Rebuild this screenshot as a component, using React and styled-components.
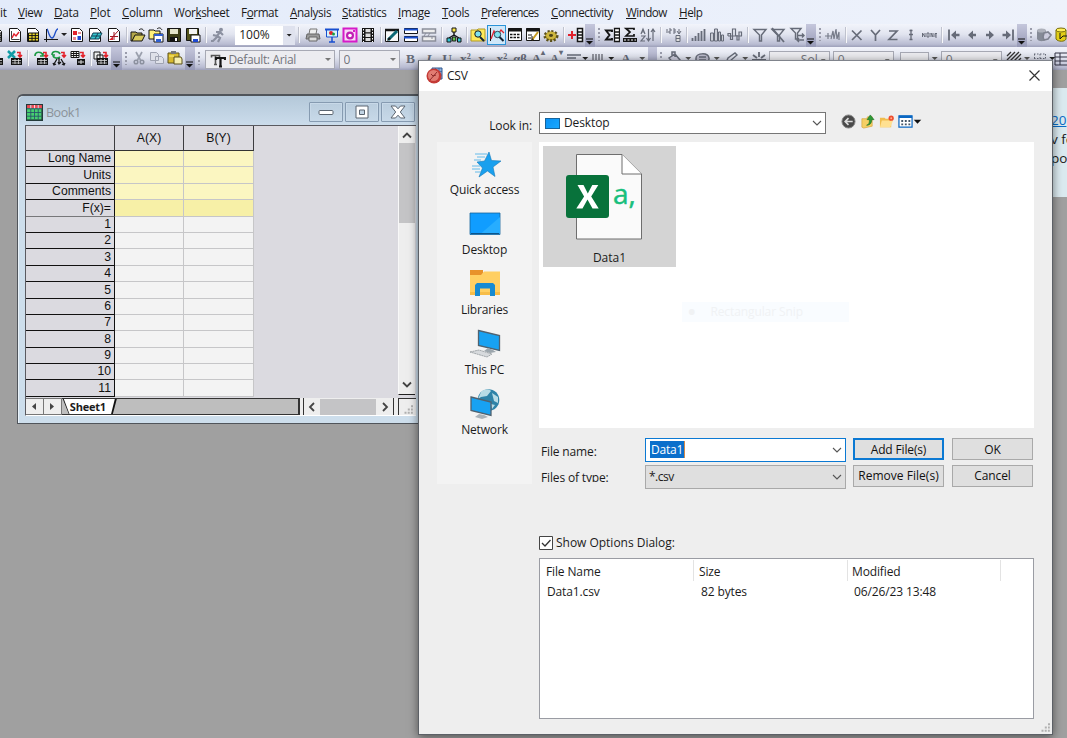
import React from "react";
import styled, { createGlobalStyle, css } from "styled-components";

const UI = '"Open Sans", "Noto Sans", sans-serif';

const Global = createGlobalStyle`
  *, *::before, *::after { box-sizing: border-box; }
  body { margin: 0; overflow: hidden; background: #a0a0a0; }
`;

const Desktop = styled.div`
  position: relative;
  width: 1067px;
  height: 738px;
  overflow: hidden;
  background: #a0a0a0;
  color: #1b1b1b;
  font: 12px/16px ${UI};
  white-space: nowrap;
`;

/* ---------- menu and toolbars ---------- */

const MenuBar = styled.nav`
  display: flex;
  height: 24px;
  background: linear-gradient(90deg, #e3ebfa, #eef2fb);
  line-height: 24px;
`;

const MenuItem = styled.span`
  flex: none;
  width: ${(p) => p.$w}px;
  letter-spacing: ${(p) => p.$ls}px;
  font-size: 11.7px;
`;

const ToolRow = styled.div`
  display: flex;
  height: ${(p) => p.$h}px;
  background: #a9abc6;
  overflow: hidden;
  margin-left: ${(p) => p.$shift || 0}px;
`;

const Band = styled.div`
  display: flex;
  flex: none;
  align-items: center;
  height: 100%;
  padding-bottom: ${(p) => p.$pb ?? 2}px;
  border-radius: 0 0 3px 3px;
  background: linear-gradient(#f2f4fb 0%, #e1e4ef 45%, #b9bcd2 88%, #9da0b9 100%);
`;

const Slot = styled.span`
  display: flex;
  flex: none;
  align-items: center;
  justify-content: center;
  width: ${(p) => p.$w || 18.25}px;
  height: 20px;
  overflow: visible;
  ${(p) => p.$active && css`
    outline: 1px solid #2a93d8;
    outline-offset: -1px;
    background: #cfe7f8;
  `}
  svg { flex: none; width: 16px; height: 16px; }
`;

const Sep = styled.i`
  flex: none;
  width: ${(p) => p.$w || 7}px;
  height: 16px;
  background: linear-gradient(90deg, #bfc2ce 1px, #f8f8fb 1px 2px, transparent 2px) no-repeat 3px 0;
`;

const Grip = styled.i`
  flex: none;
  width: 8px;
  height: 13px;
  background: repeating-linear-gradient(#9a9cab 0 2px, transparent 2px 4px) no-repeat 3px 0 / 2px 13px;
`;

const Overflow = styled.i`
  display: flex;
  flex: none;
  align-items: flex-end;
  justify-content: center;
  width: ${(p) => p.$w || 10}px;
  padding-bottom: 2px;
  background: linear-gradient(#c5c7dc, #9699b6);
  svg { width: 7px; height: 7px; }
`;

const Caret = styled.i`
  flex: none;
  width: ${(p) => p.$w || 9}px;
  height: 3px;
  background: ${(p) => p.$c || "#222"};
  clip-path: polygon(calc(50% - 3px) 0, calc(50% + 3px) 0, 50% 100%);
`;

const Combo = styled.div`
  display: flex;
  flex: none;
  align-items: center;
  width: ${(p) => p.$w}px;
  height: ${(p) => p.$h || 19}px;
  margin: ${(p) => p.$mt ?? 1}px ${(p) => p.$mr || 0}px 0 ${(p) => p.$ml || 0}px;
  padding-left: 4px;
  border: ${(p) => (p.$flat ? 0 : 1)}px solid #a7a9b4;
  background: ${(p) => p.$bg || "#ececf0"};
  color: ${(p) => p.$c || "#73757c"};
  font-size: 12px;
  letter-spacing: ${(p) => p.$ls || 0}px;
  span { flex: 1; overflow: hidden; }
  > svg { width: 16px; height: 16px; margin-right: 3px; }
`;

const ZoomCaret = styled.i`
  display: flex;
  align-items: center;
  justify-content: center;
  width: 12px;
  height: 100%;
  background: #dfe2ee;
`;

const K = "#151515";
const G = "#666b78";

const sheet = (x, y, w, h, c = K) => (
  <g stroke={c} fill="#fff">
    <path d={`M${x} ${y}h${w}v${h}h-${w}z`} />
    <path d={`M${x} ${y + h / 3}h${w}M${x} ${y + (2 * h) / 3}h${w}M${x + w / 3} ${y}v${h}M${x + (2 * w) / 3} ${y}v${h}`} />
  </g>
);
const page = <path d="M2.500 1.500h8l3 3v10h-11z" fill="#fff" stroke={K} />;
const darkGrid = (
  <>
    <path d="M4 8h11v7H4z" fill={K} />
    <path d="M5 10.500h9M5 13h9M8 9v5M11.500 9v5" stroke="#d9d9d9" strokeWidth=".8" />
  </>
);
const redHook = <path d="M10 2.500h3v4m-2-1.500 2 2 2-2" stroke="#e3222b" strokeWidth="1.6" fill="none" />;
const bars = (c) => <path d="M2.500 11v3M5.500 9v5M8.500 6v8M11.500 4v10M14.500 2v12" stroke={c} strokeWidth="1.8" />;
const funnel = <path d="M2 2.500h12L9.500 8v6h-2V8z" fill="none" stroke={G} strokeWidth="1.4" />;

const art = {
  sheetCut: <>{page}{sheet(5, 6, 8, 7)}</>,
  graph: <>{page}<path d="M4.500 4v8.500h8" stroke="#444" fill="none" /><path d="m5 11 2-4 2 2 3-4" stroke="#e1212c" strokeWidth="1.400" fill="none" /></>,
  yellowSheet: <>{page}<path d="M3.500 6h10v8h-10z" fill="#f1dc2c" stroke={K} /><path d="M3.500 8.600h10M3.500 11.300h10M7 6v8M10.300 6v8" stroke={K} /></>,
  curve: <><path d="M3.500 2v13M1 12.500h14" stroke={K} /><path d="M4 2c1 0 2 9 5 9s3-9 6-9" stroke="#1e4fc9" strokeWidth="1.300" fill="none" /></>,
  layout: <>{page}<path d="M4 4h4v4H4z" fill="#e1212c" /><path d="M8.500 9H12v4H8.500z" fill="#1d48d2" /><path d="M4 10h3v3H4zM9 5h3v2H9z" fill="#e98790" /></>,
  matrix: <>{page}<path d="m3 12 3-6h9l-3 6z" fill="#35c5ce" stroke="#123f55" /><path d="M5 9h8M8 12l3-6" stroke="#123f55" /></>,
  fn: <>{page}<path d="M4 13 12 4M8 5v8M4 9.500h8" stroke="#a51a25" /><path d="m3 13 4-3v3z" fill="#e1212c" /></>,
  open: <><path d="M1 5h5l1 1h5v3H5l-3 5H1z" fill="#b4a74a" stroke={K} /><path d="m2 14 3-6h10l-3 6z" fill="#d9cb5c" stroke={K} /><path d="M9 3c2-2 4-1 5 1" stroke={K} fill="none" /></>,
  openMulti: <><path d="M1 3h5l1 1h5v8H1z" fill="#fff27a" stroke={K} /><path d="M9 2c2-2 4-1 5 1" stroke={K} fill="none" /><path d="M6 7h9v8H6z" fill="#fff" stroke={K} /><path d="M6 7h9v2H6zM8 12h5v3H8z" fill="#2f5fd0" /></>,
  save: <><path d="M1.500 1.500h13v13h-13z" fill="#3d3e17" stroke={K} /><path d="M4 2h8v5H4z" fill="#e3e3c9" /><path d="M4 10h8v4H4z" fill="#111" /><path d="M10 11v3" stroke="#fff" strokeWidth="2" /></>,
  saveAs: <><path d="M1.500 1.500h12v12h-12z" fill="#52531d" stroke={K} /><path d="M4 2h8v5H4z" fill="#f3f3f3" /><path d="M6 8h9v7H6z" fill="#fff" stroke={K} /><path d="M8 12h5v3H8z" fill="#1d48d2" /></>,
  run: <><circle cx="11" cy="2.800" r="2" fill="#8b90a0" /><path d="m10 5-3 4-4-1m4 1 3 2-2 4M6 5l4 0 3 3M7 10l-4 4H1" stroke="#8b90a0" strokeWidth="2.200" fill="none" /></>,
  printer: <><path d="m4 7 1-5h7l-1 5" fill="#eee" stroke="#777" /><path d="M2 7h12l1 5H1z" fill="#9a9a9a" stroke="#666" /><path d="M4 10h8v4H4z" fill="#ddd" stroke="#666" /></>,
  board: <><path d="M1 2.500h14" stroke="#184fd0" strokeWidth="2" /><path d="M2.500 3h11v7h-11z" fill="#d9f3f9" stroke="#184fd0" /><path d="M8 10v5M5 15h6" stroke="#184fd0" strokeWidth="1.500" /><circle cx="7" cy="6" r="2" fill="#e1212c" /><circle cx="9.500" cy="7" r="1.500" fill="#1f9b46" /></>,
  camera: <><path d="M1.500 1.500h13v13h-13z" fill="#f8d9f7" stroke="#d61bc9" strokeWidth="2" /><circle cx="8" cy="8.500" r="4" fill="#c01fb4" /><circle cx="8" cy="8.500" r="1.800" fill="#fff" /><path d="M11 4h2" stroke="#d61bc9" strokeWidth="2" /></>,
  film: <><path d="M2 1h12v14H2z" fill={K} /><path d="M5.500 2h5v3.300h-5zM5.500 6.500h5V10h-5zM5.500 11h5v3h-5z" fill="#ddd" /><path d="M3.500 2v13M12.500 2v13" stroke="#fff" strokeDasharray="1.500 1.500" /></>,
  note: <><path d="M1.500 2.500h13v12h-13z" fill="#f8f8f8" stroke={K} /><path d="M1 3h14" stroke={K} strokeWidth="2.500" /><path d="m4 13 9-9" stroke="#0c6976" strokeWidth="3" /><path d="m3 14 2-4 2 2z" fill={K} /></>,
  split: <><path d="M1.500 1.500h13v5h-13zM1.500 9.500h13v5h-13z" fill="#fff" stroke={K} /><path d="M1 2.500h14M1 10.500h14" stroke="#184fd0" strokeWidth="2" /></>,
  splitGray: <><path d="M1.500 2h13v4h-13zM1.500 9.500h13v4.500h-13z" fill="#eee" stroke="#8b8e9a" strokeWidth="1.500" /><path d="m5 6-2 3m6-3-2 3m4 0v3" stroke="#8b8e9a" /></>,
  tree: <><path d="M8 5v4M3 11l5-3 5 3" stroke={K} strokeWidth="1.400" fill="none" /><path d="M6 1h4v4H6z" fill="#ffe94a" stroke={K} /><path d="M1 11h4v4H1z" fill="#32c4d2" stroke={K} /><path d="M6.300 10h3.500v4H6.300z" fill="#64c34e" stroke={K} /><path d="M11.500 11H15v4h-3.500z" fill="#32c4d2" stroke={K} /></>,
  folderFind: <><path d="M1 3h6l1-1h7v12H1z" fill="#ffe95a" stroke="#b09a25" /><circle cx="8" cy="7" r="3.200" fill="#7fe2ee" stroke={K} /><path d="m10 10 4 4" stroke="#123" strokeWidth="2" /></>,
  curveFind: <><path d="M1.500 1v13" stroke={K} /><path d="m2 12 3-8 3 5 4-6 3 3" stroke="#e1212c" strokeWidth="1.300" fill="none" /><circle cx="8.500" cy="7.500" r="3.200" fill="#7fe2ee" stroke="#345" /><path d="m10.500 10 4 4" stroke="#123" strokeWidth="2" /></>,
  window: <><path d="M1.500 1.500h13v12h-13z" fill="#fff" stroke={K} /><path d="M1 3h14" stroke={K} strokeWidth="3" /><path d="M3 7.500h10M3 10.500h10" stroke={K} strokeWidth="1.300" strokeDasharray="2.500 1" /></>,
  windowPen: <><path d="M1.500 1.500h13v12h-13z" fill="#fff" stroke={K} /><path d="M1 3h14" stroke={K} strokeWidth="3" /><path d="M3 8h4M3 11h3" stroke={K} /><path d="m7 13 6-8" stroke="#c69a20" strokeWidth="2" /><path d="M7 9v4h2" stroke={K} fill="none" /></>,
  gear: <><ellipse cx="8" cy="9" rx="6" ry="4.500" fill="#b49c22" stroke="#5b501b" strokeWidth="3" strokeDasharray="2 1.500" /><ellipse cx="8" cy="8.500" rx="5" ry="3.800" fill="#cdb63e" /><ellipse cx="8" cy="8.500" rx="2" ry="1.400" fill="#4c4417" /></>,
  addCol: <><path d="M0 8h8M4 4v8" stroke="#e1212c" strokeWidth="2" /><path d="M9.500 1.500h5v13h-5z" fill="#fff" stroke={K} strokeWidth="1.500" /><path d="M9 5h6M9 8h6M9 11h6" stroke={K} strokeWidth="1.500" /></>,
  sigmaCol: <><path d="M8 5V3.500H2L5.500 8 2 12.500h6V11" stroke={K} strokeWidth="1.900" fill="none" /><path d="M10.500 1.500h5v13h-5zM10.500 5h5M10.500 8h5M10.500 11h5" stroke={K} strokeWidth="1.300" fill="#fff" /></>,
  sigmaRow: <><path d="M12 3V1.500H4L8 5 4 9h8V7" stroke={K} strokeWidth="1.700" fill="none" /><path d="M1 11h14v4H1z" fill={K} /><path d="M2 13h12" stroke="#fff" strokeDasharray="2 1.500" /></>,
  sort: <><path d="m1 7 2-5 2 5M1.500 5h3M1 9h4l-4 5h4M8.500 2v11m-2-2 2 3 2-3M13 14V3m-2 2 2-3 2 3" stroke={G} fill="none" strokeWidth="1.200" /></>,
  rank: <><path d="M1 2v4M3 2h2v2H3v2h2M7 2h2v4H7M7 4h2M13 2v4m-2-2 2 3 2-3" stroke={G} fill="none" /><path d="M10 8.500h4v6h-4zM10 11.500h4" stroke={G} fill="#ddd" /></>,
  bars: bars(G),
  hist: <path d="M1.500 14V6h3v8zM5.500 14V2h3v12zM9.500 14V5h2v9zM12.500 14V8h2v6z" fill="#c9ccd5" stroke={G} />,
  wave: <path d="M1 9V6.500h2.500v6h2V9M5.500 9V2h3v7M10 8v5h2V5h2.500v4M1 9h14" stroke={G} strokeWidth="1.200" fill="none" />,
  funnel,
  funnelOff: <>{funnel}<path d="m2 1 12 14" stroke={G} strokeWidth="1.800" /></>,
  funnelGo: <><path d="M2 1.500h10L8.500 6v6h-2V6z" fill="none" stroke={G} strokeWidth="1.400" /><path d="M9 8.500h6m-2-2 2 2-2 2M15 13H8m2-2-2 2 2 2" stroke={G} strokeWidth="1.400" fill="none" /></>,
  plusWave: <path d="M0 9h6M3 6v6M6 12l2-8 1 8 2-10 1 10 2-7v8" stroke="#777c8a" strokeWidth="1.200" fill="none" />,
  x: <path d="m3 3.500 9.500 9.500M12.500 3.500 3 13" stroke={G} strokeWidth="1.700" />,
  y: <path d="m4 3 4.500 5L13 3M8.500 8v6" stroke={G} strokeWidth="1.700" fill="none" />,
  z: <path d="M4 4h8L4 12.500h8.500" stroke={G} strokeWidth="1.700" fill="none" />,
  i: <path d="M8 2.500v10M6.500 3.500h3M6.500 12.500h3M6 7.500h4" stroke={G} strokeWidth="1.300" />,
  none: <path d="M1.500 10V6l2.500 4V6M6 6h2v4H6zM10 10V6l2 4V6M16 6.500h-2V10h2M14 8h2" stroke={G} fill="none" />,
  first: <><path d="M3 2.500v11" stroke={G} strokeWidth="1.800" /><path d="m5 8 5-4.500v3.300h3.500v2.400H10v3.300z" fill={G} /></>,
  prev: <path d="m4 8 5-4.500v3.300h3v2.400H9v3.300z" fill={G} />,
  next: <path d="M12 8 7 3.500v3.300H4v2.400h3v3.300z" fill={G} />,
  last: <><path d="M13 2.500v11" stroke={G} strokeWidth="1.800" /><path d="M11 8 6 3.500v3.300H2.500v2.400H6v3.300z" fill={G} /></>,
  db: <><path d="M1 3v9c2 3 7 3 9 0V3z" fill="#858a96" /><ellipse cx="5.500" cy="3.500" rx="4.500" ry="2" fill="#aeb1bb" /><path d="m8 6 4-1 3 3-3 4-4 1-1-3z" fill="#ccd" stroke="#7e828f" strokeWidth="1.600" /></>,
  dbYellow: <><path d="M2 3v9c2 3 9 3 10 0V3z" fill="#e3cf16" stroke="#776c0a" /><ellipse cx="7" cy="3" rx="5" ry="2" fill="#fff05a" stroke="#776c0a" /><path d="M6 6v6l3-3h4" stroke={K} fill="none" /></>,
  impRed: <><path d="M0 4h9M6 2v5" stroke="#e3222b" strokeWidth="1.800" />{darkGrid}</>,
  impX: <><path d="m1 1 7 7M8 1 1 8" stroke="#129ca6" strokeWidth="2.500" />{darkGrid}{redHook}</>,
  impA: <>{darkGrid}<path d="M2 6c0-5 7-5 8 0M10 3v3H7" stroke="#1c9b45" strokeWidth="1.700" fill="none" />{redHook}</>,
  impB: <><path d="M1 5c0-5 7-4 8-1M1 5h3M9 7C6 9 3 8 2 6" stroke="#1c9b45" strokeWidth="1.700" fill="none" /><path d="M8 8v6M3 14l3-5M13 14l-3-5M2 13l1 2 2-1M7 12l1 2 2-2M11 14l2 1 1-2" stroke={K} strokeWidth="1.300" fill="none" />{redHook}</>,
  impC: <>{sheet(1, 1.5, 8, 6)}<path d="M7 9h8v6H7z" fill={K} /><path d="M8 12h6M11 10v4" stroke="#ddd" />{redHook}</>,
  impD: <><path d="M1 2h6v7H1zM4 5h6v7H4z" fill="#eee" stroke={K} />{darkGrid}{redHook}</>,
  cut: <><path d="m5 2 5 9M11 2 6 11" stroke="#9ba0ad" strokeWidth="1.700" /><circle cx="5" cy="12" r="1.800" fill="none" stroke="#8c919f" strokeWidth="1.500" /><circle cx="11" cy="12" r="1.800" fill="none" stroke="#8c919f" strokeWidth="1.500" /></>,
  copy: <path d="M1.500 2.500h6l2 2v6h-8zM6.500 6.500h6l2 2v5h-8z" fill="#dfe1e9" stroke="#a0a4b2" />,
  paste: <><path d="M1 3h11v10H1z" fill="#d8ba2f" stroke="#5b501b" /><path d="M4 1h5v3H4z" fill="#777" /><path d="M7 7h7l1 2v5H7z" fill="#f6efb0" stroke="#5b501b" /><path d="M2 6h5" stroke="#fff27a" /></>,
  tt: <><path d="M1.500 5.500v-2h8v2M5.500 4v8M4 12.500h3" stroke="#555" strokeWidth="1.600" fill="none" /><path d="M6 8V6h9v2M10.500 6v8M9 14.500h3" stroke={K} strokeWidth="2.200" fill="none" /></>,
  align: <path d="M1 4h14M1 7h9M1 10h14M1 13h9" stroke={G} strokeWidth="1.300" />,
  lines: <path d="M3 3v9M6 3v9M9 3v9M12 3v9" stroke="#888b95" strokeWidth="1.800" />,
  bucket: <path d="m3 7 6-4 5 6-5 5zM6 5V1h3v5M14 9v4" stroke={G} strokeWidth="1.500" fill="#ccd" />,
  palette: <path d="M2 7c0-5 12-6 13 0s-12 8-13 2zM5 6h7M5 9h7" stroke={G} strokeWidth="1.500" fill="#bbc" />,
  pen: <path d="m3 12 2-5 7-5 2 2-7 6zM3 13h6" stroke={G} strokeWidth="1.400" fill="none" />,
  burst: <path d="M8 1v5M2 4l4 3M14 4l-4 3M1 9h14" stroke={G} strokeWidth="1.800" />,
  hatch: <path d="m1 5 4-4M1 9l8-8M1 13 13 1M5 13 15 3M9 13l6-6" stroke="#333" strokeWidth="1.300" />,
  dots: <path d="M2 3h12M2 7.500h12M2.500 3v10M8 3v10M13.500 3v10" stroke={G} strokeDasharray="1.500 1.500" />,
  table: <path d="M1 2h14v12H1zM1 6h14M1 10h14M6 2v12" stroke="#334" fill="none" />,
};

const Icon = ({ name }) => <svg viewBox="0 0 16 16">{art[name]}</svg>;

const Tools = ({ names, w, active }) =>
  names.split(" ").map((n) => (
    <Slot key={n} $w={w} $active={n === active}>
      <Icon name={n} />
    </Slot>
  ));

const More = ({ w }) => (
  <Overflow $w={w}>
    <svg viewBox="0 0 7 7"><path d="M0 1h7" stroke="#111" /><path d="M0 3h7L3.500 6.500z" fill="#111" /></svg>
  </Overflow>
);

const Letter = styled(Slot)`
  color: ${G};
  font: ${(p) => p.$style || "bold"} ${(p) => p.$size || 13.5}px/16px "Liberation Serif", serif;
  text-decoration: ${(p) => (p.$u ? "underline" : "none")};
  sup { font-size: 8px; line-height: 8px; align-self: flex-start; }
`;

const menus = [
  ["it", 0, 18, -0.2], ["View", 0, 36, -0.3], ["Data", 0, 36, -0.2], ["Plot", 0, 32, -0.2], ["Column", 0, 52, -0.3],
  ["Worksheet", 3, 67, -0.4], ["Format", 1, 49, -0.4], ["Analysis", 0, 52, -0.35], ["Statistics", 0, 56, -0.35],
  ["Image", 0, 44, -0.3], ["Tools", 0, 39, -0.35], ["Preferences", 0, 70, -0.7], ["Connectivity", 0, 75, -0.4],
  ["Window", 0, 53, -0.55], ["Help", 0, 40, -0.45],
];

function Menu() {
  return (
    <MenuBar>
      {menus.map(([t, k, w, ls]) => (
        <MenuItem key={t} $w={w} $ls={ls}>
          {t === "it" ? t : <>{t.slice(0, k)}<u>{t[k]}</u>{t.slice(k + 1)}</>}
        </MenuItem>
      ))}
    </MenuBar>
  );
}

function TopTools() {
  return (
    <ToolRow $h={23} $shift={-13}>
      <Band>
        <Tools names="sheetCut graph yellowSheet curve" w={18.4} />
        <Caret $w={7} />
        <Tools names="layout matrix fn" w={18.4} />
        <Sep $w={6} />
        <Tools names="open openMulti save saveAs" w={18.3} />
        <Sep $w={7} />
        <Tools names="run" />
        <Combo $w={60} $ml={8} $flat $bg="#fff" $c="#222"><span>100%</span><ZoomCaret><Caret $w={8} /></ZoomCaret></Combo>
        <Sep $w={9} />
        <Tools names="printer board camera film" />
        <Sep $w={6} />
        <Tools names="note split splitGray" />
        <Sep $w={7} />
        <Tools names="tree" />
        <Sep $w={6} />
        <Tools names="folderFind curveFind window windowPen gear" active="curveFind" />
        <Sep $w={6} />
        <Tools names="addCol" />
      </Band>
      <More />
      <Band>
        <Grip />
        <Tools names="sigmaCol sigmaRow sort" /><Sep />
        <Tools names="rank" /><Sep $w={6.5} />
        <Tools names="bars hist wave" /><Sep $w={7} />
        <Tools names="funnel funnelOff funnelGo" />
      </Band>
      <More />
      <Band>
        <Grip />
        <Tools names="plusWave" /><Sep $w={6} />
        <Tools names="x y z i none" w={18} /><Sep />
        <Tools names="first prev next last" w={18} />
      </Band>
      <More />
      <Band>
        <Grip />
        <Tools names="db dbYellow" />
      </Band>
    </ToolRow>
  );
}

function FormatTools() {
  return (
    <ToolRow $h={23} $shift={-13}>
      <Band $pb={1}>
        <Tools names="impRed impX" w={18.5} />
        <Sep $w={8} />
        <Tools names="impA impB impC" />
        <Sep $w={5} />
        <Tools names="impD" w={19} />
      </Band>
      <More w={11} />
      <Band $pb={1}>
        <Grip />
        <Tools names="cut copy paste" />
      </Band>
      <More />
      <Band $pb={0}>
        <Grip />
        <Combo $w={130} $ml={2} $mr={4} $mt={2} $ls={-0.35}>
          <Icon name="tt" /><span>Default: Arial</span><Caret $c="#777" $w={11} />
        </Combo>
        <Combo $w={61} $mr={2} $mt={2}><span>0</span><Caret $c="#777" $w={11} /></Combo>
        <Letter>B</Letter>
        <Letter $style="italic bold">I</Letter>
        <Letter $u>U</Letter>
        <Letter>x²</Letter>
        <Letter>x₂</Letter>
        <Letter>x²</Letter>
        <Letter $size={12.5}>αβ</Letter>
        <Letter>A<sup>▴</sup></Letter>
        <Letter $size={12}>A<sup>▾</sup></Letter>
        <Tools names="align" w={16} /><Caret $w={7} />
        <Tools names="lines" w={19} /><Caret $w={7} />
        <Letter $w={22}>A</Letter><Caret $c="#555" $w={11} />
      </Band>
      <More w={9} />
      <Band $pb={0}>
        <Grip />
        <Tools names="bucket" w={19} /><Caret $c="#555" $w={9} />
        <Tools names="palette" w={19} /><Caret $c="#555" $w={10} />
        <Tools names="pen" w={19} /><Caret $c="#555" $w={9} />
        <Tools names="burst" w={19} />
        <Combo $w={61} $mr={3} $mt={3}><span>—— Sol</span><Caret $c="#777" $w={11} /></Combo>
        <Combo $w={61} $mr={6} $mt={3}><span>0</span><Caret $c="#777" $w={11} /></Combo>
        <Combo $w={29} $h={14} /><Caret $c="#555" $w={12} />
        <Combo $w={61} $mr={3} $mt={3}><span>0</span><Caret $c="#777" $w={11} /></Combo>
        <Tools names="hatch" /><Caret $c="#555" $w={8} />
        <Tools names="dots" /><Caret $w={6} />
        <Tools names="table" w={14} />
      </Band>
    </ToolRow>
  );
}

/* ---------- worksheet window ---------- */

const Book = styled.section`
  position: absolute;
  left: 17px;
  top: 94px;
  width: 402px;
  height: 330px;
  padding: 0 3px 0 7px;
  border: 1px solid #50555b;
  border-width: 2px 0 1px 1px;
  border-radius: 6px 0 0 0;
  background: #cddeec;
  box-shadow: inset 1px 1px 0 #eaf3fa;
`;

const BookTitle = styled.header`
  display: flex;
  align-items: center;
  height: 29px;
  margin: 0 -3px 0 -6px;
  padding: 3px 4px 0 7px;
  gap: 2px;
  background: linear-gradient(#b4c8d9, #cbdceb);
  border-radius: 5px 0 0 0;
  color: #8b9299;
  font-size: 12.5px;
  > svg { width: 17px; height: 17px; }
  > span { flex: 1; padding: 1px 0 0 1px; letter-spacing: -.45px; }
`;

const FrameButton = styled.button`
  display: flex;
  align-items: center;
  justify-content: center;
  width: 34px;
  height: 20px;
  padding: 0;
  border: 1px solid #869bb1;
  border-radius: 1px;
  background: transparent;
  box-shadow: inset 0 0 0 1px #c8d9e8;
  svg { width: 18px; height: 16px; }
`;

const BookBody = styled.div`
  display: flex;
  height: 273px;
  border: 1px solid #5a5a60;
  border-width: 1px 0 0 1px;
  background: #dbdae0;
`;

const Grid = styled.div`
  display: grid;
  grid-template-columns: 89px 69px 70px;
  grid-template-rows: 25px repeat(15, 16.4px);
  height: 272px;
  overflow: hidden;
  font: 12.2px/15px "Liberation Sans", Arial, sans-serif;
  color: #111;
`;

const HeadCell = styled.div`
  display: flex;
  align-items: center;
  justify-content: center;
  border-right: 1px solid #3c3c40;
  border-bottom: 1px solid #333;
`;

const RowHead = styled.div`
  padding: .4px 3px 0 0;
  border-right: 1px solid #111;
  border-bottom: 1px solid ${(p) => (p.$soft ? "#77777a" : "#111")};
  text-align: right;
`;

const Cell = styled.div`
  border-right: 1px solid #c6c6c8;
  border-bottom: 1px solid #c6c6c8;
  background: ${(p) => p.$bg};
`;

const Filler = styled.div`flex: 1;`;

const VScroll = styled.div`
  display: flex;
  flex-direction: column;
  align-items: center;
  width: 17px;
  height: 269px;
  margin-right: 1px;
  border-left: 1px solid #f8f8f8;
  border-bottom: 1px solid #222;
  background: #eee;
  svg { flex: none; width: 16px; height: 17px; }
`;

const Thumb = styled.div`
  width: ${(p) => p.$w || "100%"};
  height: ${(p) => p.$h}px;
  background: #c4c4c6;
`;

const VTrack = styled.div`
  flex: 1;
  width: 16px;
`;

const TabBar = styled.footer`
  display: flex;
  height: 18px;
  border-bottom: 1px solid #fff;
  border-left: 1px solid #5a5a60;
  background: #eee;
`;

const TabArrow = styled.button`
  width: 18px;
  height: 17px;
  padding: 0;
  border: 1px solid #777;
  border-width: 1px 1px 1px 0;
  background: #eee;
  svg { display: block; width: 16px; height: 15px; }
`;

const TabStrip = styled.div`
  display: flex;
  width: 239px;
  border: 1px solid #333;
  border-width: 1px 2px 1px 0;
  background: #bebebe;
`;

const SheetTab = styled.div`
  width: 54px;
  margin-left: 1px;
  background: #111;
  clip-path: polygon(0 0, 100% 0, 50px 100%, 6px 100%);
  b {
    display: block;
    padding-left: 7px;
    background: #fff;
    clip-path: polygon(1px 0, 52px 0, 48px 100%, 7px 100%);
    font-size: 11px;
    line-height: 16px;
    letter-spacing: -.2px;
  }
`;

const HScroll = styled.div`
  display: flex;
  align-items: center;
  width: 92px;
  margin-left: 3px;
  border-left: 1px solid #333;
  border-right: 1px solid #333;
  svg { width: 16px; height: 16px; }
`;

const Corner = styled.div`
  display: flex;
  align-items: flex-end;
  justify-content: flex-end;
  width: 18px;
  margin-left: 4px;
  padding: 0 3px 1px 0;
  border-left: 1px solid #333;
  border-top: 1px solid #333;
  svg { width: 9px; height: 9px; }
`;

const Chevron = ({ d, c = "#444", sw = 1.8 }) => (
  <svg viewBox="0 0 16 16"><path d={d} stroke={c} strokeWidth={sw} fill="none" /></svg>
);

const SizeDots = () => (
  <svg viewBox="0 0 9 9"><path d="M7 1.200h2M3.800 4.500h5M.500 7.800h8.300" stroke="#b0b0b0" strokeWidth="2" strokeDasharray="2 1.200" /></svg>
);

const infoRows = [["Long Name", "#fbf6c1"], ["Units", "#fbf6c1"], ["Comments", "#fbf6c1"], ["F(x)=", "#f7f0a7"]];

function BookWindow() {
  const rows = [...infoRows, ...Array.from({ length: 11 }, (_, i) => [i + 1, "#f3f3f3"])];
  return (
    <Book>
      <BookTitle>
        <svg viewBox="0 0 16 16">
          <path d="M0 0h16v16H0z" fill="#233a3a" />
          <path d="M1 1h14v3H1z" fill="#ee4c57" />
          <path d="M1 4h13.500v10.500H1z" fill="#46cf70" />
          <path d="M1 4.500h13.500M1 8h13.500M1 11.500h13.500M4.500 1v13.500M8 1v13.500M11.500 1v13.500" stroke="#28516b" strokeWidth=".8" />
          <path d="M4.500 1v3M8 1v3M11.500 1v3" stroke="#fbd6d8" />
        </svg>
        <span>Book1</span>
        <FrameButton><svg viewBox="0 0 18 16"><rect x="2" y="6.500" width="14" height="4" rx="1" fill="#fff" stroke="#5b6570" /></svg></FrameButton>
        <FrameButton><svg viewBox="0 0 18 16"><path d="M3 2h12v12H3zM6.500 6v4.500h5V6z" fill="#fff" fillRule="evenodd" stroke="#5b6570" /></svg></FrameButton>
        <FrameButton><svg viewBox="0 0 18 16"><path d="M2 2h4.500L9 4.800 11.500 2H16l-4.700 6L16 14h-4.500L9 11.200 6.500 14H2l4.700-6z" fill="#fff" stroke="#5b6570" strokeLinejoin="round" /></svg></FrameButton>
      </BookTitle>
      <BookBody>
        <Grid>
          <HeadCell /><HeadCell>A(X)</HeadCell><HeadCell>B(Y)</HeadCell>
          {rows.map(([label, bg]) => (
            <React.Fragment key={label}>
              <RowHead $soft={label === "F(x)="}>{label}</RowHead>
              <Cell $bg={bg} /><Cell $bg={bg} />
            </React.Fragment>
          ))}
        </Grid>
        <Filler />
        <VScroll>
          <Chevron d="m4 11 4-4 4 4" />
          <VTrack><Thumb $h={80} /></VTrack>
          <Chevron d="m4 5 4 4 4-4" />
        </VScroll>
      </BookBody>
      <TabBar>
        <TabArrow><svg viewBox="0 0 16 15"><path d="M10 4v7L6 7.500z" fill="#444" /></svg></TabArrow>
        <TabArrow><svg viewBox="0 0 16 15"><path d="M6 4v7l4-3.500z" fill="#444" /></svg></TabArrow>
        <TabStrip><SheetTab><b>Sheet1</b></SheetTab></TabStrip>
        <HScroll>
          <Chevron d="m10 4-4 4 4 4" />
          <Thumb $w="56px" $h={16} />
          <Filler />
          <Chevron d="m6 4 4 4-4 4" />
        </HScroll>
        <Corner><SizeDots /></Corner>
      </TabBar>
    </Book>
  );
}

/* ---------- side panel behind the dialog ---------- */

const Tips = styled.aside`
  position: absolute;
  left: 1040px;
  top: 88px;
  width: 27px;
  height: 109px;
  padding: 23px 0 0 11px;
  background: #dbeaf0;
  overflow: hidden;
  font-size: 13.5px;
  line-height: 19px;
  div { height: 19px; }
  a { color: #0b6cc7; text-decoration: underline; }
`;

/* ---------- file dialog ---------- */

const Dialog = styled.section`
  position: absolute;
  left: 418px;
  top: 60px;
  width: 635px;
  height: 675px;
  border: 1px solid #5c6066;
  border-top-color: #80848c;
  background: #eee;
  box-shadow: 0 2px 9px rgba(0, 0, 0, .5);
`;

const DialogTitle = styled.header`
  display: flex;
  align-items: center;
  height: 30px;
  padding: 0 10px 2px 7px;
  background: #fff;
  letter-spacing: -.2px;
  > span { flex: 1; padding: 1px 0 0 4px; }
  > svg:first-child { width: 17px; height: 17px; }
  > svg:last-child { width: 15px; height: 15px; }
`;

const LookRow = styled.div`
  display: flex;
  align-items: center;
  height: 22px;
  margin-top: 21px;
`;

const NavIcons = styled.div`
  display: flex;
  gap: 4px;
  margin: -4px 0 0 15px;
  svg { width: 15px; height: 15px; }
  svg:last-child { margin-left: -7px; }
`;

const LookLabel = styled.label`
  width: 120px;
  padding: 6px 7px 0 0;
  text-align: right;
  letter-spacing: -.1px;
`;

const Select = styled.div`
  display: flex;
  align-items: center;
  width: ${(p) => p.$w}px;
  height: ${(p) => p.$h}px;
  padding: 0 0 0 ${(p) => p.$pl ?? 5}px;
  border: 1px solid ${(p) => p.$line || "#767676"};
  background: ${(p) => p.$bg || "#fff"};
  letter-spacing: ${(p) => p.$ls ?? -0.1}px;
  > svg:last-child { width: 16px; height: 16px; margin-left: auto; }
`;

const Monitor = styled.i`
  width: ${(p) => p.$w}px;
  height: ${(p) => p.$h}px;
  margin-right: 4px;
  border: 1px solid #17649c;
  background: linear-gradient(135deg, #0a92f5, #18a8ff);
`;

const Selected = styled.span`
  padding: 0 1px;
  margin-bottom: 1px;
  border-right: 1px solid #d28a4a;
  background: #0a6fcb;
  color: #fff;
  line-height: 17px;
`;

const Main = styled.div`
  display: grid;
  grid-template-columns: 95px 495px;
  column-gap: 7px;
  margin: 8px 0 0 18px;
`;

const Places = styled.nav`
  height: 342px;
  padding-top: 6px;
  background: #f3f3f3;
`;

const Place = styled.div`
  display: flex;
  flex-direction: column;
  align-items: center;
  height: 60px;
  letter-spacing: -.15px;
  svg { width: 32px; height: 32px; margin-bottom: 2px; }
`;

const FileList = styled.div`
  height: 286px;
  padding: 4px;
  background: #fff;
`;

const FileTile = styled.div`
  display: flex;
  flex-direction: column;
  align-items: center;
  width: 133px;
  height: 121px;
  padding-top: 6px;
  background: #d4d4d4;
  svg { width: 80px; height: 90px; margin: 0 0 8px -13px; }
`;

const Ghost = styled.div`
  display: flex;
  gap: 15px;
  width: 167px;
  height: 20px;
  margin: 35px 0 0 139px;
  padding-left: 6px;
  background: #f9fcff;
  color: #f0f2f4;
  line-height: 20px;
  letter-spacing: -.1px;
  b { font-size: 20px; }
`;

const Fields = styled.div`
  display: grid;
  grid-template-columns: 106px 208px 99px 81px;
  grid-template-rows: 24px 24px;
  gap: 3px 0;
  margin-top: 10px;
`;

const FieldLabel = styled.label`
  height: ${(p) => p.$h || 22}px;
  padding: ${(p) => p.$pt || 6}px 0 0 2px;
  overflow: hidden;
  letter-spacing: -.15px;
`;

const Button = styled.button`
  width: ${(p) => p.$w}px;
  height: 22px;
  padding: ${(p) => p.$pt || 0}px 0 0;
  border: ${(p) => (p.$main ? "2px solid #0b79d3" : "1px solid #a9a9a9")};
  background: #dfdfdf;
  color: #111;
  font: 12px/16px ${UI};
  letter-spacing: ${(p) => p.$ls ?? -0.1}px;
`;

const Option = styled.div`
  display: flex;
  align-items: center;
  height: 16px;
  margin: 45px 0 0 120px;
  padding-top: 1px;
  letter-spacing: -.02px;
  svg { width: 14px; height: 14px; margin-right: 3px; }
`;

const Picked = styled.div`
  display: grid;
  grid-template-columns: 154px 154px 153px;
  grid-template-rows: 25px 18px;
  width: 495px;
  height: 161px;
  margin: 8px 0 0 120px;
  border: 1px solid #9a9ca3;
  background: #fff;
  letter-spacing: -.13px;
`;

const PickedHead = styled.div`
  height: 21px;
  margin-top: 1px;
  padding: 4px 0 0 ${(p) => p.$pl ?? 5}px;
  border-right: 1px solid #e3e3e3;
`;

const PickedCell = styled.div`padding-left: ${(p) => p.$pl ?? 7}px;`;

const DialogGrip = styled.div`
  display: flex;
  justify-content: flex-end;
  padding: 4px 2px 0 0;
  svg { width: 9px; height: 9px; }
`;

const QuickIcon = () => (
  <svg viewBox="0 0 32 32">
    <path d="m20 4 2.500 8.500 9.500.500-8 6 2 9.500-7.500-5.500L10 29l3.500-9L8 14l7.500-1z" fill="#1aa0ee" stroke="#1478b8" strokeWidth=".600" />
    <path d="M6 6h12M8 9h8M5 12h7M3 18h8M3 21h8M6 24h6" stroke="#56b5ea" strokeWidth=".900" />
  </svg>
);
const DesktopIcon = () => (
  <svg viewBox="0 0 32 32"><path d="M1 5h30v21.500H1z" fill="#109dff" stroke="#17649c" strokeWidth=".800" /><path d="M12 25.500 31 9v16.500z" fill="#27adff" /><path d="M2 25.500h28" stroke="#0a548b" /></svg>
);
const LibraryIcon = () => (
  <svg viewBox="0 0 32 32"><path d="M1 2h13v5H1z" fill="#e8922a" /><path d="M1 7h11l3-3.500h16v23H1z" fill="#ffcf62" /><path d="M1 24h30v3H1z" fill="#f7bd49" /><path d="M6 28V17l2-2h16l2 2v11h-5v-7.500H11V28z" fill="#168bd2" /></svg>
);
const PcIcon = () => (
  <svg viewBox="0 0 32 32"><path d="m9.500 2.500 21 5v15l-21-5z" fill="#18a2f2" stroke="#51626f" strokeWidth="1.300" /><path d="m19 20 5 2 3 2-6 1-6-2z" fill="#9ca6ad" /><path d="m1 24 9-2 13 4-5 3z" fill="#d7dadd" stroke="#858c91" strokeWidth=".700" strokeDasharray="2 .500" /></svg>
);
const NetworkIcon = () => (
  <svg viewBox="0 0 32 32"><circle cx="19.500" cy="12" r="10.800" fill="#2e83a8" /><path d="M12 4c3-3 8-3 10-1l-4 5-6 1-3 2zM23 5l6 4v6l-4-2zM22 16l4 1-3 4z" fill="#b8dce6" /><path d="m2 9 20 5v13.500L2 22.500z" fill="#18a2f2" stroke="#51626f" strokeWidth="1.300" /><path d="m10 26 5 1 4 2-6 2-7-2z" fill="#aab2b8" /></svg>
);

const places = [["Quick access", QuickIcon], ["Desktop", DesktopIcon], ["Libraries", LibraryIcon], ["This PC", PcIcon], ["Network", NetworkIcon]];

const CsvIcon = () => (
  <svg viewBox="0 0 80 90">
    <path d="M13.500 2.500H59L78.500 22v65h-65z" fill="#fafafa" stroke="#6e6e6e" />
    <path d="M59 2.500V22h19.500" fill="#fff" stroke="#6e6e6e" />
    <rect x="3" y="23" width="43" height="43" rx="3" fill="#08723b" />
    <path d="M14.500 33h6l4.300 8.500 4.500-8.500h6L28.200 44.500 35.700 56.500h-6.200l-5-9-5 9h-6.200l7.800-12z" fill="#fff" />
    <text x="50" y="52" fontFamily="Open Sans, sans-serif" fontSize="28" stroke="#18bf7c" strokeWidth=".5" fill="#18bf7c">a,</text>
  </svg>
);

const DropMark = () => <Chevron d="m4 6 4 4 4-4" c="#555" sw={1.1} />;

function FileDialog() {
  return (
    <Dialog>
      <DialogTitle>
        <svg viewBox="0 0 17 17">
          <path d="M6 1h10v11H6z" fill="#8cafdc" stroke="#31588f" />
          <path d="M6 4.500h10M6 8h10M9.500 1v11M13 1v11" stroke="#31588f" strokeWidth=".700" />
          <circle cx="8" cy="9" r="7.500" fill="#c43a35" /><circle cx="7.500" cy="8.500" r="5.500" fill="#e17c72" />
          <path d="m4 13 7-8M5 7l2 2 3-1" stroke="#822" strokeWidth=".9" fill="none" />
        </svg>
        <span>CSV</span>
        <svg viewBox="0 0 15 15"><path d="m2.500 2.500 10 10M12.500 2.500l-10 10" stroke="#333" strokeWidth="1.200" /></svg>
      </DialogTitle>
      <LookRow>
        <LookLabel>Look in:</LookLabel>
        <Select $w={287} $h={22}><Monitor $w={15} $h={11} />Desktop<DropMark /></Select>
        <NavIcons>
          <svg viewBox="0 0 16 16"><circle cx="8" cy="8" r="7" fill="#4a4a4a" stroke="#8a8a8a" /><path d="M8 4.500 4.500 8 8 11.500M5 8h7.500" stroke="#ddd" strokeWidth="1.800" fill="none" /></svg>
          <svg viewBox="0 0 16 16"><path d="M2 5h5l1-2h5v10l-9 2-2-1z" fill="#f5cf64" stroke="#d4a23a" strokeWidth=".700" /><path d="M7 12c3-1 3-3 3-6H7.500L11 1 15 6h-2.500c0 4-2 6-5.500 6z" fill="#2d9a38" stroke="#176d22" strokeWidth=".600" /></svg>
          <svg viewBox="0 0 16 16"><path d="M1 4h5l1 1h6v9H1z" fill="#f0bd4d" /><path d="m1 14 2-7h12l-3 7z" fill="#ffe091" /><circle cx="13" cy="4.500" r="2.800" fill="#ee4d2d" /><circle cx="13" cy="4.500" r="1" fill="#ffb08f" /></svg>
          <svg viewBox="0 0 16 16"><path d="M1 2h14v12H1z" fill="#fff" stroke="#0b67c2" strokeWidth="1.300" /><path d="M1 3h14" stroke="#0b67c2" strokeWidth="2.500" /><path d="M3.500 7.500h10M3.500 11h10" stroke="#456" strokeWidth="2" strokeDasharray="2 1.800" /></svg>
          <svg viewBox="0 0 16 16"><path d="M4 6h8l-4 4.500z" fill="#111" /></svg>
        </NavIcons>
      </LookRow>
      <Main>
        <Places>
          {places.map(([label, Pic]) => <Place key={label}><Pic />{label}</Place>)}
        </Places>
        <div>
          <FileList>
            <FileTile><CsvIcon />Data1</FileTile>
            <Ghost><b>•</b><span>Rectangular Snip</span></Ghost>
          </FileList>
          <Fields>
            <FieldLabel>File name:</FieldLabel>
            <Select $w={201} $h={24} $line="#0b79d3" $pl={4} $ls={-0.2}><Selected>Data1</Selected><DropMark /></Select>
            <Button $w={91} $main $pt={1} $ls={-0.15}>Add File(s)</Button>
            <Button $w={81} $pt={1}>OK</Button>
            <FieldLabel $h={17} $pt={5}>Files of type:</FieldLabel>
            <Select $w={201} $h={24} $line="#a9a9a9" $bg="#dfdfdf" $pl={3} $ls={-0.5}>*.csv<DropMark /></Select>
            <Button $w={91} $ls={0.02}>Remove File(s)</Button>
            <Button $w={81}>Cancel</Button>
          </Fields>
        </div>
      </Main>
      <Option>
        <svg viewBox="0 0 14 14"><path d="M.500.500h13v13H.500z" fill="#fff" stroke="#444" /><path d="m3 7 3 3 5.500-6" stroke="#333" strokeWidth="1.300" fill="none" /></svg>
        Show Options Dialog:
      </Option>
      <Picked>
        <PickedHead $pl={6}>File Name</PickedHead><PickedHead>Size</PickedHead><PickedHead $pl={4}>Modified</PickedHead>
        <PickedCell>Data1.csv</PickedCell><PickedCell>82 bytes</PickedCell><PickedCell $pl={6}>06/26/23 13:48</PickedCell>
      </Picked>
      <DialogGrip><SizeDots /></DialogGrip>
    </Dialog>
  );
}

export default function App() {
  return (
    <>
      <Global />
      <Desktop>
        <Menu />
        <TopTools />
        <FormatTools />
        <BookWindow />
        <Tips><div><a>20</a></div><div>v fe</div><div>po</div></Tips>
        <FileDialog />
      </Desktop>
    </>
  );
}
